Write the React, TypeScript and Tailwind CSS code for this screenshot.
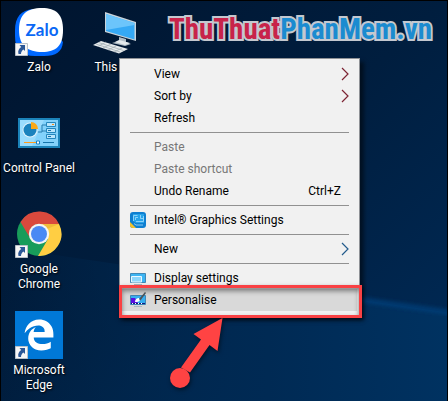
import type { ReactNode } from 'react';
import { FaEdgeLegacy } from 'react-icons/fa6';

type Shortcut = {
  label: string;
  icon: ReactNode;
  linked?: boolean;
};

type Entry = {
  label: string;
  icon?: ReactNode;
  hint?: string;
  arrow?: string;
  disabled?: boolean;
  active?: boolean;
};

function ZaloIcon() {
  return (
    <svg viewBox="0 0 48 48" className="size-12" aria-hidden="true">
      <path
        d="M18 1C6 2 0 9 0 22v6c0 14 6 20 20 20h9c12 0 18-4 19-14z"
        fill="#0068ff"
      />
      <path
        d="M27 0C41 0 48 6 48 22S41 44 27 44 4 38 4 22 12 0 27 0z"
        fill="#fff"
      />
      <text
        x="27"
        y="28"
        textAnchor="middle"
        fontFamily="Lato, sans-serif"
        fontWeight="700"
        fontSize="17"
        fill="#0a68f5"
      >
        Zalo
      </text>
    </svg>
  );
}

function ComputerIcon() {
  return (
    <svg viewBox="0 0 48 48" className="size-12" aria-hidden="true">
      <path d="M14 4l31 10v19L14 24z" fill="#c9d3da" />
      <path d="M15 6l28.500 9v16.500L15 23z" fill="#35a9f5" />
      <path d="M15 6l28.500 9v2L15 22z" fill="#6cc5fb" />
      <path d="M28 29l7 2v3l5 2-6 2-13-3 7-2z" fill="#b4c0c8" />
      <path d="M24 34l4-2 11 3-5 2z" fill="#e5eaed" />
      <path d="M10 33L37 41l-9 4.500L2 37z" fill="#e6eaec" />
      <path
        d="M7.500 34.500l25 8M5 36l24 8M15 34l-8 4.500M20 36l-8 4M25 38l-8 4M31 40l-8 4"
        stroke="#9ba7ae"
        strokeWidth=".7"
      />
    </svg>
  );
}

function ControlPanelIcon() {
  return (
    <svg viewBox="0 0 48 48" className="size-12" aria-hidden="true">
      <path d="M3 9h42v30H3z" fill="#1b83b9" />
      <path d="M5 11h38v26H5z" fill="#83d2fb" />
      <path d="M5 11h24L17 37H5z" fill="#9bdcfd" />
      <circle cx="15" cy="21" r="7.500" fill="#dff2fc" />
      <circle cx="15" cy="21" r="6.500" fill="#1b82bd" />
      <path d="M16 20v-7a7 7 0 0 1 7 7z" fill="#fba919" />
      <path d="M23 23h4v-7h4M27 22h4" fill="none" stroke="#2a7eb0" />
      <path
        d="M31.500 13.500h9v4h-9zM31.500 19.500h9v4h-9zM31.500 25.500h9v4h-9z"
        fill="#b8e5fc"
        stroke="#2386bd"
      />
      <path d="M37 15.500h2" stroke="#f58b18" />
      <path d="M33 21.500h3M33 27.500h3M28 33.500h11" stroke="#1574ab" />
      <path d="M9 33.500h13" stroke="#ff9c1b" />
      <path d="M21.500 32h3v3h-3z" fill="#fff" stroke="#1482c5" />
    </svg>
  );
}

function ChromeIcon() {
  return (
    <svg viewBox="0 0 48 48" className="size-12" aria-hidden="true">
      <circle cx="24" cy="24" r="22" fill="#189c5a" />
      <path d="M24 14h20A22 22 0 0 1 23 46l10-17z" fill="#ffce43" />
      <path d="M5.500 12A22 22 0 0 1 44 14H24a10 10 0 0 0-9 14z" fill="#d9493d" />
      <path d="M24 14h20l-12 5z" fill="#d9a12b" opacity=".4" />
      <circle cx="24" cy="24" r="10.200" fill="#f4f4f4" />
      <circle cx="24" cy="24" r="8" fill="#4a89f4" />
    </svg>
  );
}

function EdgeIcon() {
  return (
    <span className="flex size-12 items-center justify-center bg-[#0078d7] text-white">
      <FaEdgeLegacy className="size-8" aria-hidden="true" />
    </span>
  );
}

function LinkBadge() {
  return (
    <svg
      viewBox="0 0 13 13"
      className="absolute bottom-0 left-0 size-[13px]"
      aria-hidden="true"
    >
      <path d="M.5.500h12v12H.5z" fill="#f6f6f6" stroke="#b9c0c8" />
      <path
        d="M4.500 2H10v6L8.500 6.500C7 7.500 6 9 6 11H3.500C2.500 8 4 5.500 6.200 4z"
        fill="#2b5797"
      />
    </svg>
  );
}

function IntelIcon() {
  return (
    <svg viewBox="0 0 16 16" className="size-4" aria-hidden="true">
      <rect width="16" height="16" rx="3" fill="#0f7fd0" />
      <path d="M0 10l6 6H3a3 3 0 0 1-3-3z" fill="#f4c22c" />
      <path d="M3 2h11v9H6l-3-2z" fill="#27a4ea" />
      <path
        d="M3.500 9V3.500h4M5.500 8V5.500H8M10.500 3v3.500h3M6 9.500h7.500V4M4 11.500l2 1.500h7"
        fill="none"
        stroke="#a4defc"
        strokeWidth=".8"
      />
    </svg>
  );
}

function DisplayIcon() {
  return (
    <svg viewBox="0 0 16 16" className="size-4" aria-hidden="true">
      <path d="M.5 3.500h15v9H.5z" fill="#3cb4f3" stroke="#4188b5" />
      <path d="M1.500 6.500h10V12h-10z" fill="#8cd6fb" stroke="#e9f8ff" />
      <path d="M4 14.500h8" stroke="#a9b8c2" />
    </svg>
  );
}

function PersonaliseIcon() {
  return (
    <svg viewBox="0 0 16 16" className="size-4" aria-hidden="true">
      <path d="M.5 3.500h15v9H.5z" fill="#36aef1" stroke="#4188b5" />
      <path d="M1 6h4l3 5H1z" fill="#5a10e0" />
      <path d="M1 11.500h14" stroke="#111a80" />
      <path d="M2 11.500h12" stroke="#fff" strokeDasharray="1 2" />
      <path d="M5 10c0-3 2-4 4-4l1 2c-1 2-3 2-5 2z" fill="#fff" />
      <path d="M9 7l6-7 1 1-5.500 7.500z" fill="#4e565c" />
      <path d="M4 14.500h8" stroke="#a9b8c2" />
    </svg>
  );
}

const columns: Shortcut[][] = [
  [
    { label: 'Zalo', icon: <ZaloIcon />, linked: true },
    { label: 'Control Panel', icon: <ControlPanelIcon /> },
    { label: 'Google Chrome', icon: <ChromeIcon />, linked: true },
    { label: 'Microsoft Edge', icon: <EdgeIcon />, linked: true },
  ],
  [{ label: 'This PC', icon: <ComputerIcon /> }],
];

const groups: Entry[][] = [
  [
    { label: 'View', arrow: 'text-[#7d2433]' },
    { label: 'Sort by', arrow: 'text-[#7d2433]' },
    { label: 'Refresh' },
  ],
  [
    { label: 'Paste', disabled: true },
    { label: 'Paste shortcut', disabled: true },
    { label: 'Undo Rename', hint: 'Ctrl+Z' },
  ],
  [{ label: 'Intel® Graphics Settings', icon: <IntelIcon /> }],
  [{ label: 'New', arrow: 'text-[#235b8c]' }],
  [
    { label: 'Display settings', icon: <DisplayIcon /> },
    { label: 'Personalise', icon: <PersonaliseIcon />, active: true },
  ],
];

function Wallpaper() {
  return (
    <svg
      viewBox="0 0 448 401"
      preserveAspectRatio="none"
      className="absolute inset-0 size-full"
      aria-hidden="true"
    >
      <defs>
        <linearGradient id="sky" x1="0" y1="0" x2="1" y2="1">
          <stop offset="0" stopColor="#00142e" />
          <stop offset=".5" stopColor="#001e3f" />
          <stop offset="1" stopColor="#002b58" />
        </linearGradient>
        <linearGradient id="floor" x1="0" y1="0" x2="1" y2="0">
          <stop offset="0" stopColor="#002a52" stopOpacity="0" />
          <stop offset=".6" stopColor="#002a54" />
          <stop offset="1" stopColor="#003261" />
        </linearGradient>
        <filter id="soft">
          <feGaussianBlur stdDeviation="2" />
        </filter>
      </defs>
      <path d="M0 0h448v401H0z" fill="url(#sky)" />
      <path d="M0 240L448 304v97H0z" fill="url(#floor)" />
      <path
        d="M330 287L460 305"
        stroke="#06407c"
        strokeWidth="4"
        filter="url(#soft)"
      />
    </svg>
  );
}

function DesktopIcon({ label, icon, linked }: Shortcut) {
  return (
    <button
      type="button"
      className="flex h-[101px] w-[76px] flex-col items-center text-center text-white"
    >
      <span className="relative block size-12">
        {icon}
        {linked && <LinkBadge />}
      </span>
      <span className="mt-1 leading-[15px] [text-shadow:1px_1px_2px_#000]">
        {label}
      </span>
    </button>
  );
}

function MenuEntry({ label, icon, hint, arrow, disabled, active }: Entry) {
  return (
    <button
      type="button"
      role="menuitem"
      disabled={disabled}
      className={`flex h-[22px] w-full items-center px-2 text-left text-black disabled:text-[#777] ${
        active ? 'bg-[#d9d9d9]' : ''
      }`}
    >
      <span className="mr-2 size-4 shrink-0">{icon}</span>
      <span className="grow whitespace-nowrap">{label}</span>
      {hint && <span className="pr-2">{hint}</span>}
      {arrow && (
        <svg
          viewBox="0 0 8 14"
          className={`h-[14px] w-2 ${arrow}`}
          aria-hidden="true"
        >
          <path
            d="M1 1l6 6-6 6"
            fill="none"
            stroke="currentColor"
            strokeWidth="1.200"
          />
        </svg>
      )}
    </button>
  );
}

export default function App() {
  return (
    <main className="relative min-h-screen w-full overflow-hidden border border-black bg-[#001b3a] font-['Roboto',sans-serif] text-xs">
      <Wallpaper />

      <div className="relative flex pt-[7px]">
        {columns.map((column, i) => (
          <div key={i} className="flex flex-col">
            {column.map((shortcut) => (
              <DesktopIcon key={shortcut.label} {...shortcut} />
            ))}
          </div>
        ))}
      </div>

      <p className="absolute top-[10px] right-[15px] font-['Roboto_Condensed','Roboto',sans-serif] text-[29px] leading-9 font-bold text-[#1b8bd0] [-webkit-text-stroke:4px_#c4c8cf] [paint-order:stroke_fill]">
        <span className="text-[#c8234a]">ThuThuat</span>PhanMem.vn
      </p>

      <div
        role="menu"
        className="absolute top-[57px] left-[118px] w-[241px] border border-[#8f9296] bg-[#f1f1f1] px-[2px] py-1 shadow-[4px_4px_4px_rgba(0,0,0,0.5)]"
      >
        {groups.map((group, i) => (
          <div key={i}>
            {i > 0 && <hr className="mx-2 my-[3px] border-[#919191]" />}
            {group.map((entry) => (
              <MenuEntry key={entry.label} {...entry} />
            ))}
          </div>
        ))}
      </div>

      <div className="pointer-events-none absolute top-[284px] left-[118px] h-[33px] w-[243px] border-3 border-[#f94144] shadow-[inset_0_3px_5px_rgba(0,0,0,0.45),1px_2px_4px_rgba(0,0,0,0.5)]" />
      <svg
        viewBox="0 0 56 76"
        className="pointer-events-none absolute top-[315px] left-[168px] h-[76px] w-14 drop-shadow-[1px_2px_2px_rgba(0,0,0,0.5)]"
        aria-hidden="true"
      >
        <path
          d="M53.500 2L24.500 18l7.500 5.500-20 28 9 5 19.500-27.500 8 6z"
          fill="#ff4343"
        />
        <circle cx="11" cy="62" r="10" fill="#ff4343" />
      </svg>
    </main>
  );
}
